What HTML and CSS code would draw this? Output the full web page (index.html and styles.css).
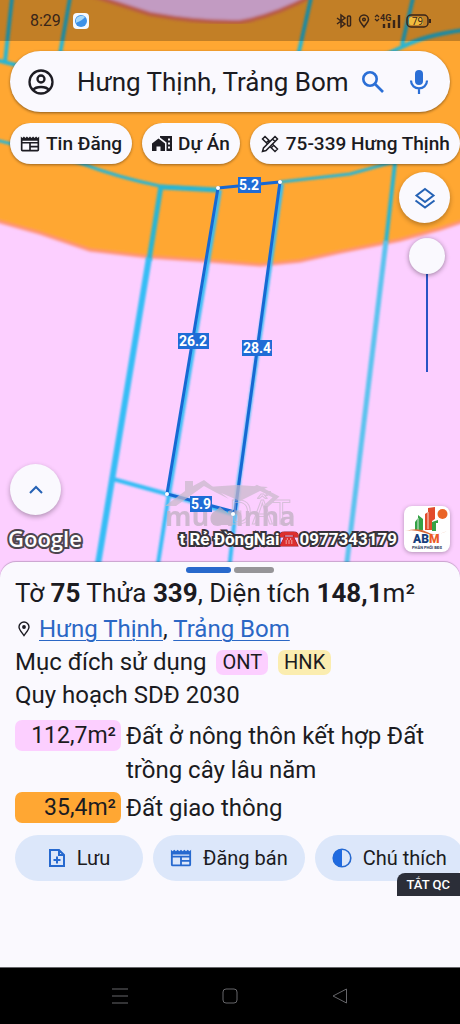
FILE: index.html
```html
<!DOCTYPE html>
<html lang="vi">
<head>
<meta charset="utf-8">
<meta name="viewport" content="width=device-width, initial-scale=1">
<title>Bản đồ quy hoạch</title>
<link rel="stylesheet" href="styles.css">
</head>
<body>
<svg class="sprite" width="0" height="0" aria-hidden="true">
  <symbol id="news" viewBox="0 0 24 24"><path fill-rule="evenodd" d="M1 3l1.800 1.700L4.700 3l1.800 1.700L8.300 3l1.900 1.700L12 3l1.800 1.700L15.700 3l1.800 1.700L19.300 3l1.900 1.700L23 3v16a2 2 0 0 1-2 2H3a2 2 0 0 1-2-2zM3 11.500v7.500h8v-7.500zm10 0v2.700h8v-2.700zm0 4.700v2.800h8v-2.800zM3 8.200v1.300h18v-1.300z"/></symbol>
</svg>
<main class="map">
  <svg class="map-canvas" viewBox="0 0 460 578" preserveAspectRatio="xMidYMin slice" aria-label="Bản đồ thửa đất">
    <defs>
      <filter id="edge" x="-5%" y="-5%" width="110%" height="110%"><feGaussianBlur stdDeviation="1.800"/></filter>
      <filter id="soft" x="-5%" y="-5%" width="110%" height="110%"><feGaussianBlur stdDeviation=".9"/></filter>
    </defs>
    <rect width="460" height="578" fill="#fccfff"/>
    <path d="M-10-10H470V219L440 229 400 240 340 252 300 261 260 265 210 261 150 257 90 250 40 233-10 219Z" fill="#ffa733" stroke="#ff8f72" stroke-width="3" filter="url(#edge)"/>
    <path d="M88-6Q125 6 150 14Q200 23 240 22Q275 16 315-6Z" fill="#ffccff" stroke="#f2765c" stroke-width="4" filter="url(#edge)"/>
    <g fill="none" stroke="#2bb5d2" stroke-width="4" filter="url(#soft)">
      <path d="M12-2 5 62M-4 60 20 66M70-2 60 54M311-2 298 56M413-2 402 45M464 30Q425 35 402 47L365 64"/>
      <path d="M-4 140 20 146 80 163Q120 178 160 186L218 190" stroke-width="3"/>
      <path d="M160 187 218 190" stroke-width="5"/>
      <path d="M280 182 350 174 397 161" stroke-width="3"/>
      <path d="M161 186 149 260" stroke-width="5"/>
      <path d="M395 163 386 242" stroke-width="4"/>
    </g>
    <g fill="none" stroke="#35bdf5" filter="url(#soft)">
      <path d="M149 258 97 570" stroke-width="6"/>
      <path d="M386 241 346 570" stroke-width="5" stroke="#5cc3ee"/>
      <path d="M113 479 167 494 233 514" stroke-width="4"/>
      <path d="M220 190 169 494 157 570M282 184 239 480 229 570" stroke-width="4"/>
    </g>
    <path d="M218 188 280 182 235 512 167 494Z" fill="none" stroke="#1768d3" stroke-width="3"/>
    <g opacity=".72">
      <path d="M165 506 185 491V481H193V486L204 480 229 499 215 492 204 486 176 506ZM207 487 237 485 268 487 240 501Z" fill="#c9b9cb"/>
      <path d="M238 499 257 487 276 497 265 507" fill="none" stroke="#c9b9cb" stroke-width="4"/>
      <text class="mark-back" x="229" y="524">ĐẤT</text>
      <text class="mark-front" x="165" y="526">muonnha</text>
      <path d="M212 514 220 507 229 514V525H213Z" fill="#bdafbf"/>
    </g>
    <g fill="#fff"><circle cx="218" cy="188" r="2"/><circle cx="280" cy="182" r="2"/><circle cx="167" cy="494" r="2"/><circle cx="233" cy="514" r="2"/></g>
    <g fill="#1f6cd6"><rect x="238" y="177" width="23" height="16"/><rect x="178" y="333" width="31" height="16"/><rect x="242" y="340" width="30" height="16"/><rect x="190" y="496" width="22" height="16"/></g>
    <g class="measure"><text x="249" y="190">5.2</text><text x="193" y="346">26.2</text><text x="257" y="353">28.4</text><text x="201" y="509">5.9</text></g>
  </svg>

  <header class="status">
    <span class="clock">8:29</span>
    <svg class="app-dot" width="16" height="16" viewBox="0 0 16 16"><rect width="16" height="16" rx="4" fill="#f5f9ff"/><circle cx="8" cy="8" r="6" fill="#3c91e8"/><path d="M3 10C5 9 10 7 12 4A6 6 0 0 0 3 6Z" fill="#a7d9fa"/></svg>
    <svg class="status-icons" width="96" height="20" viewBox="0 0 96 20" fill="none" stroke="#382519" stroke-width="1.500">
      <path d="M1 7 9 13 5 16V4L9 7 1 13"/><rect x="11.500" y="5" width="3" height="10" rx="1"/>
      <path d="M28 16C25 12 23.500 10.500 23.500 8.500A4.500 4.500 0 0 1 32.500 8.500C32.500 10.500 31 12 28 16Z"/><circle cx="28" cy="8.500" r="1.300"/>
      <path d="M39 6 41 4 43 6M39 8 41 10 43 8" stroke-width="1.200"/>
      <text class="net" x="44" y="10">4G</text>
      <path d="M48 17V13M53 17V12M58 17V9M63 17V4" stroke-width="2.400"/>
      <rect x="71" y="4" width="21" height="12" rx="4"/><rect x="73" y="6" width="14" height="8" rx="2" fill="#f1bd3e" stroke="none"/><path d="M94 8V12" stroke-width="2"/>
      <text class="charge" x="76" y="14">79</text>
    </svg>
  </header>

  <form class="search" role="search">
    <button type="button" class="icon-btn" aria-label="Tài khoản"><svg width="28" height="28" viewBox="0 0 28 28" fill="none" stroke="#1d1c23" stroke-width="2.300"><circle cx="14" cy="14" r="11.500"/><circle cx="14" cy="11" r="3.500"/><path d="M6 22C9 18 19 18 22 22"/></svg></button>
    <input type="text" class="search-text" aria-label="Tìm kiếm" value="Hưng Thịnh, Trảng Bom">
    <button type="button" class="icon-btn" aria-label="Tìm"><svg width="24" height="24" viewBox="0 0 24 24" fill="none" stroke="#2b6fd6" stroke-width="2.600"><circle cx="9" cy="9" r="6.700"/><path d="M14 14 22 22"/></svg></button>
    <button type="button" class="icon-btn mic" aria-label="Nói"><svg width="20" height="26" viewBox="0 0 20 26" fill="none" stroke="#2b6fd6" stroke-width="2.200"><rect x="6" y="1" width="8" height="15" rx="4" fill="#2b6fd6" stroke="none"/><path d="M2 11.500C2 22 18 22 18 11.500M10 19.500V25"/></svg></button>
  </form>

  <nav class="chips" aria-label="Lối tắt">
    <button type="button" class="chip"><svg width="20" height="20" fill="#1d1c23"><use href="#news"/></svg>Tin Đăng</button>
    <button type="button" class="chip"><svg width="20" height="20" viewBox="0 0 20 20" fill="#1d1c23"><path fill-rule="evenodd" d="M0 9.500 6.500 4.500 13 9.500V17H8.500V12.500H4.500V17H0ZM8 2H20V17H14.500V8.500L8 3.500ZM16 4.500V6.500H18V4.500ZM16 8.500V10.500H18V8.500ZM16 12.500V14.500H18V12.500Z"/></svg>Dự Án</button>
    <button type="button" class="chip"><svg width="20" height="20" viewBox="-1 -1 20 20" fill="none" stroke="#1d1c23" stroke-width="1.500"><path d="M4 1.500 7.800 5.300 5.300 7.800 1.500 4ZM10.200 12.700 12.700 10.200 16.500 14 14 16.500ZM14 1.500 16.500 4 5 15.500 1.500 16.500 2.500 13ZM11.500 4 14 6.500M7.800 5.300 9 6.500M5.300 7.800 6.500 9M11.500 9 12.700 10.200M9 11.500 10.200 12.700"/></svg>75-339 Hưng Thịnh</button>
  </nav>

  <div class="controls">
    <button type="button" class="round" aria-label="Lớp bản đồ"><svg width="22" height="22" viewBox="0 0 22 22" fill="none" stroke="#2562b5" stroke-width="2"><path d="M11 2 19.500 8.500 11 15 2.500 8.500ZM1.500 13.500 11 20.500 20.500 13.500"/></svg></button>
    <input class="opacity" type="range" min="0" max="100" value="0" aria-label="Độ mờ">
  </div>

  <div class="map-foot">
    <div class="foot-left">
      <button type="button" class="round" aria-label="Mở rộng"><svg width="16" height="16" viewBox="0 0 16 16" fill="none" stroke="#2562b5" stroke-width="2"><path d="M2 11 8 5 14 11"/></svg></button>
      <span class="google">Google</span>
    </div>
    <div class="ticker"><span>t Rẻ ĐồngNai</span><svg width="20" height="18" viewBox="0 0 18 18" preserveAspectRatio="none"><path d="M1 7Q0 2 5 2H13Q18 2 17 7H13V5H5V7ZM5 7H13L17 16H1Z" fill="#dd2e2e" stroke="#8e1d27"/><path d="M7 9H8M10 9H11M6 11H7M8.500 11H9.500M11 11H12M6 13H7M8.500 13H9.500M11 13H12" stroke="#fff" stroke-width="1.200"/></svg><span>0977343179</span></div>
    <a class="abm" href="#abm" aria-label="ABM"><svg width="46" height="46" viewBox="0 0 46 46">
      <path d="M11 24V16L14 12V9L19 13V24Z" fill="#35a146"/><path d="M14 12V24" stroke="#fff" stroke-width=".8"/>
      <path d="M21 24V8L24 6V2L31 1V13L28 15V24Z" fill="#e24b2c"/><path d="M24 6V23" stroke="#fff" stroke-width=".8"/>
      <path d="M28 25V16L34 14V17L32 17V25Z" fill="#35a146"/><circle cx="38.500" cy="8" r="5" fill="#ea6426"/>
      <path d="M1 25Q15 21 23 26T43 25Q31 31 21 27Q10 23 1 25Z" fill="#d86736"/>
      <text class="abm-name" x="9" y="37">AB<tspan fill="#ec5c24">M</tspan></text>
      <text class="abm-sub" x="8" y="43">PHÂN PHỐI BĐS</text>
    </svg></a>
  </div>
</main>

<section class="sheet">
  <div class="pager"><i class="page active"></i><i class="page"></i></div>
  <h1 class="title">Tờ <b>75</b> Thửa <b>339</b>, Diện tích <b>148,1</b>m²</h1>
  <p class="place"><svg width="12" height="16" viewBox="0 0 12 16" fill="none" stroke="#1d1c23" stroke-width="1.400"><path d="M6 14.500C3 10.500 1 8.500 1 6A5 5 0 0 1 11 6C11 8.500 9 10.500 6 14.500Z"/><circle cx="6" cy="6" r="1.200" fill="#1d1c23"/></svg><span><a href="#hung-thinh">Hưng Thịnh</a>, <a href="#trang-bom">Trảng Bom</a></span></p>
  <p class="purpose">Mục đích sử dụng <span class="tag ont">ONT</span><span class="tag hnk">HNK</span></p>
  <p class="plan">Quy hoạch SDĐ 2030</p>
  <ul class="areas">
    <li><span class="area pink">112,7m²</span><span>Đất ở nông thôn kết hợp Đất trồng cây lâu năm</span></li>
    <li><span class="area orange">35,4m²</span><span>Đất giao thông</span></li>
  </ul>
  <div class="actions">
    <button type="button" class="action save"><svg width="18" height="20" viewBox="0 0 18 20" fill="none" stroke="#2669cf" stroke-width="2"><path d="M2 2H11L16 7V18H2ZM11 2V7H16M9 8.500V15.500M5.500 12H12.500"/></svg>Lưu</button>
    <button type="button" class="action"><svg width="22" height="22" fill="#2669cf"><use href="#news"/></svg>Đăng bán</button>
    <button type="button" class="action"><svg width="20" height="20" viewBox="0 0 20 20"><circle cx="10" cy="10" r="8.800" fill="none" stroke="#2669cf" stroke-width="1.600"/><path d="M10 1V19A9 9 0 0 1 10 1Z" fill="#1f6ae0"/></svg>Chú thích</button>
  </div>
  <button type="button" class="ads-off">TẮT QC</button>
</section>

<footer class="sysnav">
  <button type="button" aria-label="Gần đây"><svg width="16" height="16" viewBox="0 0 16 16"><path d="M0 1H16M0 8H16M0 15H16"/></svg></button>
  <button type="button" aria-label="Trang chủ"><svg width="16" height="16" viewBox="0 0 16 16"><rect x="1" y="1" width="14" height="14" rx="3"/></svg></button>
  <button type="button" aria-label="Quay lại"><svg width="16" height="16" viewBox="0 0 16 16"><path d="M1 8 14.500 1V15Z" stroke-linejoin="round"/></svg></button>
</footer>
</body>
</html>
```
FILE: styles.css
```css
* { box-sizing: border-box; }
body {
  margin: 0;
  min-height: 100vh;
  display: flex;
  flex-direction: column;
  background: #faf9fe;
  color: #1b1b21;
  font-family: Roboto, "Noto Sans", sans-serif;
  overflow-x: hidden;
}
button { border: 0; padding: 0; margin: 0; background: none; font: inherit; color: inherit; cursor: pointer; }
svg { display: block; flex: none; }
.sprite { position: absolute; }
p, h1, ul { margin: 0; padding: 0; }

.map {
  position: relative;
  flex: 1;
  display: flex;
  flex-direction: column;
  padding-bottom: 26px;
  background: #fccfff;
}
.map-canvas { position: absolute; inset: 0; width: 100%; height: 100%; }
.map > :not(.map-canvas) { position: relative; }
.measure { fill: #fff; font: 700 14px Roboto, sans-serif; text-anchor: middle; }
.mark-back { font: 32px "Open Sans", sans-serif; fill: none; stroke: #c9b9cb; stroke-width: 1; }
.mark-front { font: 700 27px "Open Sans", sans-serif; fill: #bdafbf; }

.status {
  display: flex;
  align-items: center;
  gap: 12px;
  height: 41px;
  padding: 0 28px 0 30px;
  background: rgba(0, 0, 0, .24);
  color: #382519;
}
.clock { font-size: 16px; }
.status-icons { margin-left: auto; }
.net { font: 700 9px Roboto, sans-serif; fill: #382519; stroke: none; }
.charge { font: 10px Roboto, sans-serif; fill: #382519; stroke: none; }

.search {
  display: flex;
  align-items: center;
  height: 61px;
  margin: 10px 10px 0;
  padding: 0 21px 0 17px;
  border-radius: 31px;
  background: #faf9fe;
  box-shadow: 0 1px 3px rgba(0, 0, 0, .45);
}
.search-text {
  flex: 1;
  min-width: 0;
  margin: 0 8px 0 22px;
  padding: 0;
  border: 0;
  outline: 0;
  background: none;
  color: #1b1b21;
  font: 26px Roboto, sans-serif;
}
.mic { margin-left: 24px; }

.chips { display: flex; gap: 10px; margin-top: 11px; padding: 0 0 4px 10px; overflow: hidden; }
.chip {
  flex: none;
  display: flex;
  align-items: center;
  gap: 6px;
  height: 41px;
  padding: 0 10px;
  border-radius: 21px;
  background: #faf9fe;
  box-shadow: 0 1px 3px rgba(0, 0, 0, .4);
  font-size: 19px;
  font-weight: 500;
}

.controls { align-self: flex-end; display: flex; flex-direction: column; align-items: flex-end; gap: 15px; margin: 4px 10px 0 0; }
.round {
  display: grid;
  place-items: center;
  width: 51px;
  height: 51px;
  border-radius: 50%;
  background: #faf9fe;
  box-shadow: 0 2px 5px rgba(0, 0, 0, .3);
}
.opacity {
  appearance: none;
  writing-mode: vertical-lr;
  width: 36px;
  height: 134px;
  margin: 0 5px 0 0;
  background: linear-gradient(#2854c4, #2854c4) center / 2px 100% no-repeat;
}
.opacity::-webkit-slider-thumb {
  appearance: none;
  width: 36px;
  height: 36px;
  border-radius: 50%;
  background: #faf9fe;
  box-shadow: 0 1px 5px rgba(0, 0, 0, .4);
}

.map-foot { display: flex; align-items: flex-end; margin-top: auto; padding: 0 10px 0 8px; }
.foot-left { display: flex; flex-direction: column; gap: 9px; }
.foot-left .round { margin-left: 2px; }
.google, .ticker { color: #fff; paint-order: stroke fill; -webkit-text-stroke: 4px #4e454f; line-height: 28px; }
.google { font: 600 22px/28px "Open Sans", sans-serif; }
.ticker {
  display: flex;
  align-items: center;
  margin: 0 7px 0 auto;
  font-size: 17px;
  font-weight: 700;
  line-height: 26px;
  -webkit-text-stroke-color: #37343b;
}
.abm { border-radius: 8px; background: #fff; box-shadow: 0 1px 4px rgba(0, 0, 0, .3); }
.abm-name { font: 900 12px Roboto, sans-serif; fill: #173f7d; }
.abm-sub { font: 700 4px Roboto, sans-serif; fill: #29385a; }

.sheet {
  position: relative;
  margin-top: -16px;
  padding: 5px 0 86px 15px;
  border-radius: 16px 16px 0 0;
  background: #faf9fe;
  box-shadow: 0 -1px 1px rgba(80, 60, 90, .3);
  font-size: 24px;
}
.pager { display: flex; justify-content: center; gap: 3px; padding-right: 15px; }
.page { width: 40px; height: 6px; border-radius: 3px; background: #969598; }
.page.active { width: 45px; background: #2869cc; }
.title { font-size: 26px; font-weight: 400; line-height: 40px; }
.title b { font-weight: 700; }
.place { display: flex; align-items: center; gap: 9px; padding-left: 3px; line-height: 32px; }
.place a { color: #2b67c5; text-decoration-thickness: 1px; text-underline-offset: 3px; }
.purpose { display: flex; align-items: center; gap: 10px; line-height: 34px; }
.tag { padding: 0 6px; border-radius: 7px; font-size: 20px; line-height: 25px; }
.ont { background: #fccfff; }
.hnk { background: #fbedb0; }
.plan { line-height: 32px; }
.areas { display: flex; flex-direction: column; gap: 4px; margin-top: 8px; padding-right: 15px; list-style: none; line-height: 34px; }
.areas li { display: flex; gap: 5px; align-items: flex-start; }
.area { flex: none; width: 106px; margin-top: 1px; padding-right: 5px; border-radius: 7px; text-align: right; font-size: 23px; line-height: 31px; }
.pink { background: #fccfff; }
.orange { background: #ffa733; }
.actions { display: flex; gap: 10px; margin-top: 10px; overflow: hidden; }
.action {
  flex: none;
  display: flex;
  align-items: center;
  justify-content: center;
  gap: 11px;
  height: 46px;
  padding: 0 17px;
  border-radius: 23px;
  background: #dce7fa;
  font-size: 20px;
}
.save { width: 128px; }
.ads-off {
  position: absolute;
  right: 0;
  bottom: 71px;
  height: 23px;
  padding: 0 10px;
  border-radius: 8px 0 0 0;
  background: #2b2e38;
  color: #fff;
  font-size: 13px;
  font-weight: 500;
}

.sysnav { display: flex; justify-content: center; gap: 94px; height: 57px; background: #000; border-top: 1px solid #66666a; }
.sysnav svg { fill: none; stroke: #66666a; stroke-width: 1; }
.sysnav button { display: flex; align-items: center; }
```
